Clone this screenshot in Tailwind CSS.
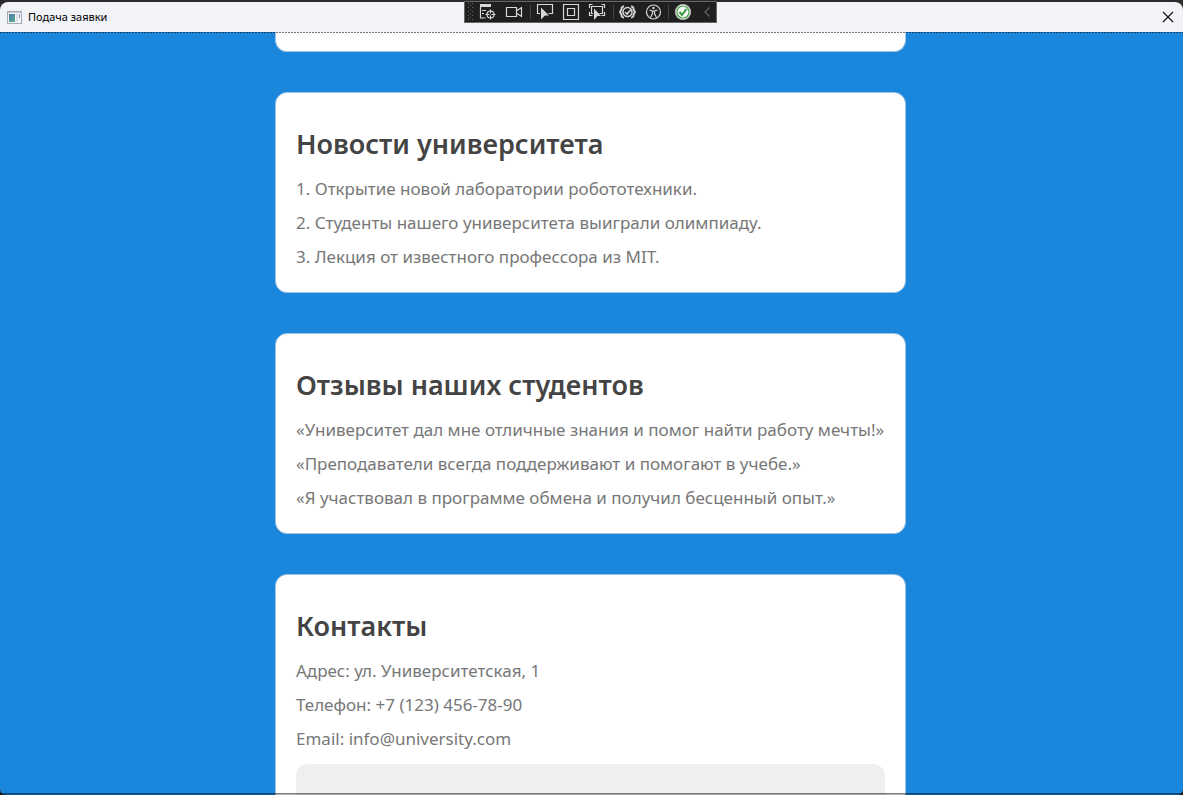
<!DOCTYPE html>
<html lang="ru">
<head>
<meta charset="utf-8">
<meta name="viewport" content="width=device-width, initial-scale=1">
<title>Подача заявки</title>
<script src="https://cdn.jsdelivr.net/npm/@tailwindcss/browser@4"></script>
</head>
<body class="bg-[#2b2b2b] font-['Noto_Sans','Open_Sans',sans-serif]">
<div class="relative flex h-screen flex-col overflow-hidden pt-[2px]">
  <header class="flex h-[30px] shrink-0 items-center justify-between rounded-t-lg bg-[#f1f3f7] pr-[7px] pl-[7px]">
    <div class="flex items-center gap-[6px]">
      <svg width="15" height="13" viewBox="0 0 15 13" aria-hidden="true">
        <defs><linearGradient id="pane" x1="0" y1="0" x2="1" y2="1"><stop offset="0" stop-color="#4a79b8"/><stop offset="1" stop-color="#58b087"/></linearGradient></defs>
        <rect x=".5" y=".5" width="14" height="12" fill="#f4f4f6" stroke="#a9abb5"/>
        <rect x="1" y="1" width="13" height="1" fill="#c9cad2"/>
        <rect x="2" y="3" width="6" height="8" fill="url(#pane)"/>
        <rect x="9" y="3" width="2" height="8" fill="#dfe1e8"/>
        <rect x="12" y="3" width="1" height="4" fill="#6c9cc4"/>
      </svg>
      <h1 class="text-[11px] leading-4 text-black">Подача заявки</h1>
    </div>
    <button type="button" aria-label="Закрыть" class="flex size-4 items-center justify-center">
      <svg width="12" height="12" viewBox="0 0 12 12" fill="none" stroke="#111" stroke-width="1.2"><path d="M1 1l10 10M11 1L1 11"/></svg>
    </button>
  </header>

  <main class="flex min-h-0 flex-1 flex-col items-center gap-10 overflow-hidden rounded-b-md bg-[#1a86dc] pr-[2px]">
    <div class="h-5 w-[631px] max-w-full shrink-0 rounded-b-xl border border-t-0 border-[#a0c4e2] bg-white"></div>

    <section class="w-[631px] max-w-full shrink-0 rounded-xl border border-[#a0c4e2] bg-white px-5 pt-5 pb-[18px] text-[17px] leading-[34px] text-[#777]">
      <h2 class="pt-2 pb-[5px] text-[27px] leading-[46px] font-semibold text-[#444]">Новости университета</h2>
      <p>1. Открытие новой лаборатории робототехники.</p>
      <p>2. Студенты нашего университета выиграли олимпиаду.</p>
      <p>3. Лекция от известного профессора из MIT.</p>
    </section>

    <section class="w-[631px] max-w-full shrink-0 rounded-xl border border-[#a0c4e2] bg-white px-5 pt-5 pb-[18px] text-[17px] leading-[34px] text-[#777]">
      <h2 class="pt-2 pb-[5px] text-[27px] leading-[46px] font-semibold text-[#444]">Отзывы наших студентов</h2>
      <p class="whitespace-nowrap">«Университет дал мне отличные знания и помог найти работу мечты!»</p>
      <p>«Преподаватели всегда поддерживают и помогают в учебе.»</p>
      <p>«Я участвовал в программе обмена и получил бесценный опыт.»</p>
    </section>

    <section class="w-[631px] max-w-full shrink-0 rounded-xl border border-[#a0c4e2] bg-white px-5 pt-5 pb-[18px] text-[17px] leading-[34px] text-[#777]">
      <h2 class="pt-2 pb-[5px] text-[27px] leading-[46px] font-semibold text-[#444]">Контакты</h2>
      <p>Адрес: ул. Университетская, 1</p>
      <p>Телефон: +7 (123) 456-78-90</p>
      <p>Email: info@university.com</p>
      <div class="mt-2 h-60 rounded-xl bg-[#efefef]"></div>
    </section>
  </main>

  <!-- Dotted line under the title bar and the window's bottom edge -->
  <div class="pointer-events-none absolute inset-x-0 top-8 h-px bg-[repeating-linear-gradient(90deg,#0008_0_2px,#0000_2px_3px)]"></div>
  <div class="pointer-events-none absolute inset-x-0 bottom-0 h-[2px] border-t border-black/50 bg-black/30 bg-clip-padding"></div>

  <!-- Floating debug toolbar -->
  <div role="toolbar" aria-label="Отладка" class="absolute top-px left-[464px] h-[22px] w-[253px] border border-[#666] bg-[#1f1f1f]">
    <svg class="absolute top-0 left-0" width="251" height="20" viewBox="465 2 251 20" fill="none" stroke="#d8d8d8" stroke-width="1.2" aria-hidden="true">
      <g fill="#666" stroke="none">
        <path d="M468 3h1v1h-1zM472 3h1v1h-1zM468 7h1v1h-1zM472 7h1v1h-1zM468 11h1v1h-1zM472 11h1v1h-1zM468 15h1v1h-1zM472 15h1v1h-1zM468 19h1v1h-1zM472 19h1v1h-1zM470 5h1v1h-1zM470 9h1v1h-1zM470 13h1v1h-1zM470 17h1v1h-1z"/>
      </g>
      <path d="M530.500 5v14M613.500 5v14M668.500 5v14" stroke="#444" stroke-width="1"/>
      <path d="M480 4h11v3h-11z" fill="#d8d8d8" stroke="none"/>
      <path d="M480.500 7v11h5M482 10.500h4M482 13.500h2"/>
      <circle cx="490.500" cy="14.500" r="3.500"/><path d="M490.500 9.500v4M490.500 15.500v4M485.500 14.500h4M491.500 14.500h4"/>
      <path d="M506.500 7.500h10v9h-10zM517 10.500l4.500-3v9l-4.500-3"/>
      <path d="M540 13.500h-2.500v-9h15v9h-4"/><path d="M541 7.500l8 8h-4l-4 4z" fill="#d8d8d8" stroke="none"/>
      <path d="M563.500 4.500h15v15h-15zM567.500 8.500h7v7h-7z"/>
      <path d="M589.500 8V4.500h3M601.500 4.500h3V8M604.500 12v3.500h-3M589.500 12v3.500h3M593 13.500h-1.500v-7h11v7h-3"/><path d="M594 8.500l7 7.500h-3.500l-3.500 4z" fill="#d8d8d8" stroke="none"/>
      <path d="M624 6.500q-3 0-2.500 3l-1.500 2.500 1.500 2.500q-.5 3 2.500 3M631 6.500q3 0 2.500 3l1.500 2.500-1.500 2.500q.5 3-2.500 3" stroke-width="1.900"/><circle cx="627.500" cy="12" r="4.500" stroke-width="1.500"/><path d="M625 12l2 2 4-4.500" stroke-width="1.600"/>
      <circle cx="653.500" cy="12" r="7"/><circle cx="653.500" cy="8" r="1.200" fill="#d8d8d8" stroke="none"/><path d="M649.500 10l3 1v2.500l-2 4M657.500 10l-3 1v2.500l2 4M652 11h3"/>
      <circle cx="683" cy="12" r="7.500" fill="#fafafa" stroke="#bbb"/><circle cx="683" cy="12" r="6" stroke="#4aa34a"/><path d="M679.500 12l2.500 3 4.500-6" stroke="#36963a" stroke-width="2"/>
      <path d="M709.500 7.500l-4.500 4.500 4.500 4.500" stroke="#666"/>
    </svg>
    <div class="flex h-full items-center gap-1 pl-3">
      <button type="button" class="h-5 w-6" aria-label="Визуальное дерево"></button>
      <button type="button" class="h-5 w-6" aria-label="Запись"></button>
      <button type="button" class="h-5 w-6" aria-label="Выбрать элемент"></button>
      <button type="button" class="h-5 w-6" aria-label="Границы макета"></button>
      <button type="button" class="h-5 w-6" aria-label="Отслеживать фокус"></button>
      <button type="button" class="h-5 w-6" aria-label="Сбои привязки"></button>
      <button type="button" class="h-5 w-6" aria-label="Специальные возможности"></button>
      <button type="button" class="h-5 w-6" aria-label="Горячая перезагрузка"></button>
    </div>
  </div>
</div>
</body>
</html>
